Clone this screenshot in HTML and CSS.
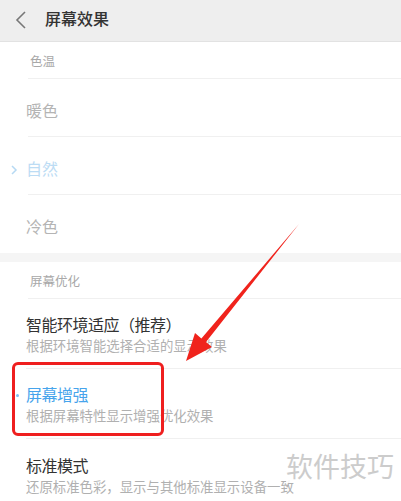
FILE: index.html
```html
<!DOCTYPE html>
<html lang="zh">
<head>
<meta charset="utf-8">
<link rel="stylesheet" href="styles.css">
</head>
<body>
<div class="page">
  <header class="topbar">
    <svg class="back" width="12" height="18" viewBox="0 0 12 18"><path d="M10 1 L2 9 L10 17" fill="none" stroke="#777" stroke-width="1.6"/></svg>
    <span class="title">屏幕效果</span>
  </header>

  <div class="label">色温</div>
  <div class="item faded"><span>暖色</span></div>
  <div class="item natural">
    <svg class="chev" width="8" height="12" viewBox="0 0 8 12"><path d="M2 2 L6 6 L2 10" fill="none" stroke="#b6d9f3" stroke-width="1.5"/></svg>
    <span>自然</span>
  </div>
  <div class="item faded last"><span>冷色</span></div>

  <div class="band"></div>

  <div class="label">屏幕优化</div>
  <div class="item2">
    <div class="main">智能环境适应（推荐）</div>
    <div class="sub">根据环境智能选择合适的显示效果</div>
  </div>
  <div class="item2 active">
    <span class="dot"></span>
    <div class="main">屏幕增强</div>
    <div class="sub">根据屏幕特性显示增强优化效果</div>
  </div>
  <div class="item2 last">
    <div class="main">标准模式</div>
    <div class="sub">还原标准色彩，显示与其他标准显示设备一致</div>
  </div>

  <div class="redbox"></div>
  <svg class="arrow" width="401" height="501" viewBox="0 0 401 501">
    <polygon points="299,224 206,342 212,347 186,361 195,333 201.4,338.4" fill="#f0231c"/>
  </svg>
  <div class="watermark">软件技巧</div>
</div>
</body>
</html>
```

FILE: styles.css
```css
* { box-sizing: border-box; }
html, body { margin: 0; padding: 0; }
body {
  width: 401px;
  height: 501px;
  overflow: hidden;
  background: #fff;
  font-family: "Noto Sans CJK SC", "Noto Sans", sans-serif;
}
.page {
  position: relative;
  width: 401px;
  height: 501px;
  overflow: hidden;
}
.topbar {
  height: 42px;
  background: #eeeeee;
  border-bottom: 1px solid #e2e2e2;
  display: flex;
  align-items: center;
  padding-left: 15px;
}
.back { margin-right: 18px; margin-top: -2px; }
.title {
  font-size: 16px;
  font-weight: 500;
  color: #333;
  margin-top: -6px;
}
.label {
  height: 37px;
  margin-left: 28px;
  padding-left: 2px;
  display: flex;
  align-items: center;
  font-size: 12.5px;
  color: #a8a8a8;
  border-bottom: 1px solid #f0f0f0;
}
.item {
  height: 58px;
  margin-left: 28px;
  padding-left: 0;
  display: flex;
  align-items: center;
  font-size: 16px;
  position: relative;
  border-bottom: 1px solid #f0f0f0;
  padding-top: 4px;
}
.item span { margin-left: -2px; }
.item.last { border-bottom: none; }
.item.faded { color: #b4b4b4; }
.item.natural { color: #bcdcf4; }
.chev { position: absolute; left: -18px; top: 27px; }
.band {
  height: 9px;
  background: #f5f5f5;
}
.item2 {
  height: 70px;
  margin-left: 26px;
  display: flex;
  flex-direction: column;
  justify-content: center;
  position: relative;
  border-bottom: 1px solid #f0f0f0;
}
.item2.last { border-bottom: none; }
.main {
  font-size: 16px;
  line-height: 22px;
  color: #333;
  letter-spacing: -0.5px;
}
.sub {
  font-size: 13.4px;
  line-height: 18px;
  color: #b0b0b0;
  margin-top: 1px;
  white-space: nowrap;
}
.item2.active .main { color: #46a4ec; }
.dot {
  position: absolute;
  left: -10px;
  top: 25px;
  width: 3px;
  height: 3px;
  border-radius: 50%;
  background: #7fbdf0;
}
.redbox {
  position: absolute;
  left: 12px;
  top: 362px;
  width: 152px;
  height: 74px;
  border: 3px solid #ef1f1f;
  border-radius: 6px;
}
.arrow { position: absolute; left: 0; top: 0; }
.watermark {
  position: absolute;
  left: 286px;
  top: 449px;
  font-size: 27px;
  line-height: 34px;
  color: #cccccc;
  background: rgba(255,255,255,0.85);
}
```
